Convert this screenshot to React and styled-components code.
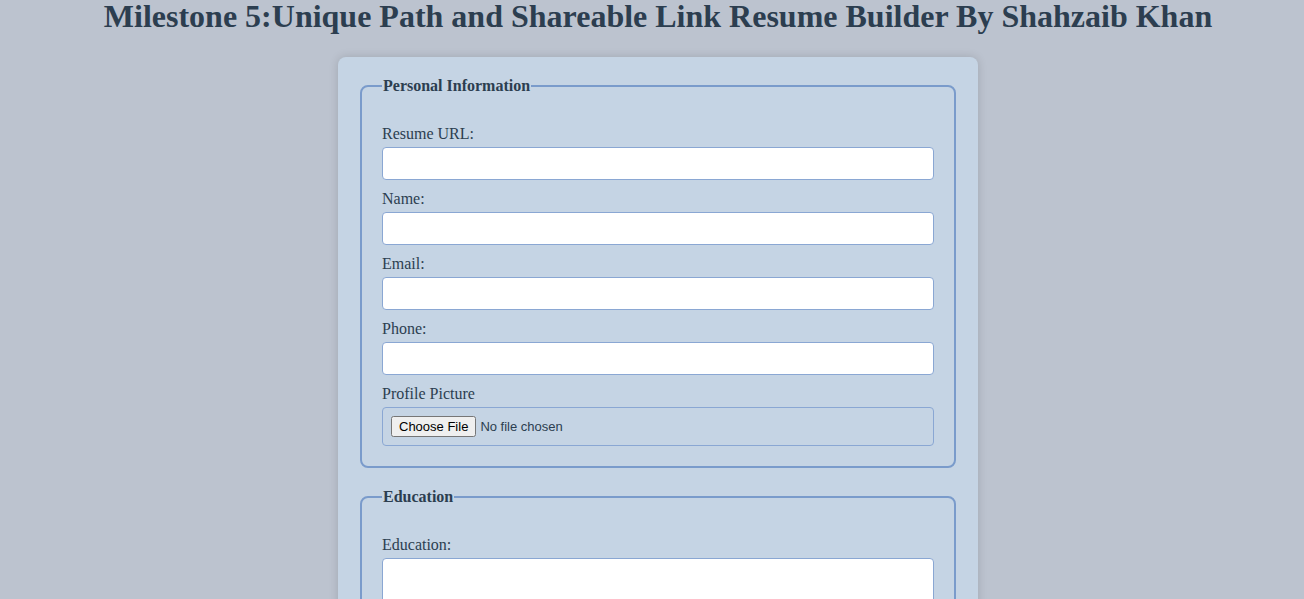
import React from "react";
import styled, { createGlobalStyle } from "styled-components";

const GlobalStyle = createGlobalStyle`
  html, body {
    margin: 0;
    padding: 0;
    background-color: #bcc3cf;
    font-family: "Liberation Serif", "Times New Roman", serif;
    color: #2c3e50;
  }
`;

const Page = styled.div`
  display: flex;
  flex-direction: column;
  align-items: center;
  padding: 0 0 40px 12px;
`;

const Title = styled.h1`
  margin: 0 0 25px;
  font-size: 32px;
  font-weight: bold;
  text-align: center;
  color: #2c3e50;
  line-height: 32px;
`;

const Card = styled.form`
  width: 640px;
  box-sizing: border-box;
  padding: 20px;
  background-color: #c5d4e4;
  border-radius: 8px;
  box-shadow: 0 0 10px rgba(0, 0, 0, 0.15);
`;

const Section = styled.fieldset`
  margin: 0 2px 20px;
  padding: 30px 20px 20px;
  border: 2px solid #7a9bcb;
  border-radius: 8px;
`;

const Legend = styled.legend`
  padding: 0 1px;
  font-size: 16px;
  font-weight: bold;
  color: #2c3e50;
`;

const Label = styled.label`
  display: block;
  font-size: 16px;
  line-height: 18px;
  margin-bottom: 4px;
  color: #2c3e50;
`;

const Input = styled.input`
  display: block;
  width: 100%;
  box-sizing: border-box;
  height: 33px;
  margin: 0 0 10px;
  padding: 6px 8px;
  background: #fff;
  border: 1px solid #8aa7d3;
  border-radius: 4px;
  font-size: 15px;
  outline: none;
`;

const FileInput = styled.input`
  display: block;
  width: 100%;
  box-sizing: border-box;
  padding: 8px;
  margin: 0;
  border: 1px solid #8aa7d3;
  border-radius: 4px;
  font-family: "Liberation Sans", Arial, sans-serif;
  font-size: 13px;
  background: transparent;
`;

const TextArea = styled.textarea`
  display: block;
  width: 100%;
  box-sizing: border-box;
  height: 90px;
  margin: 0 0 10px;
  padding: 8px;
  background: #fff;
  border: 1px solid #8aa7d3;
  border-radius: 4px;
  resize: vertical;
  outline: none;
`;

const Field = ({ label, id, type = "text" }) => (
  <>
    <Label htmlFor={id}>{label}</Label>
    <Input id={id} type={type} />
  </>
);

export default function App() {
  return (
    <Page>
      <GlobalStyle />
      <Title>
        Milestone 5:Unique Path and Shareable Link Resume Builder By Shahzaib Khan
      </Title>
      <Card>
        <Section>
          <Legend>Personal Information</Legend>
          <Field label="Resume URL:" id="url" />
          <Field label="Name:" id="name" />
          <Field label="Email:" id="email" type="email" />
          <Field label="Phone:" id="phone" type="tel" />
          <Label htmlFor="pic">Profile Picture</Label>
          <FileInput id="pic" type="file" />
        </Section>
        <Section>
          <Legend>Education</Legend>
          <Label htmlFor="edu">Education:</Label>
          <TextArea id="edu" />
        </Section>
      </Card>
    </Page>
  );
}
